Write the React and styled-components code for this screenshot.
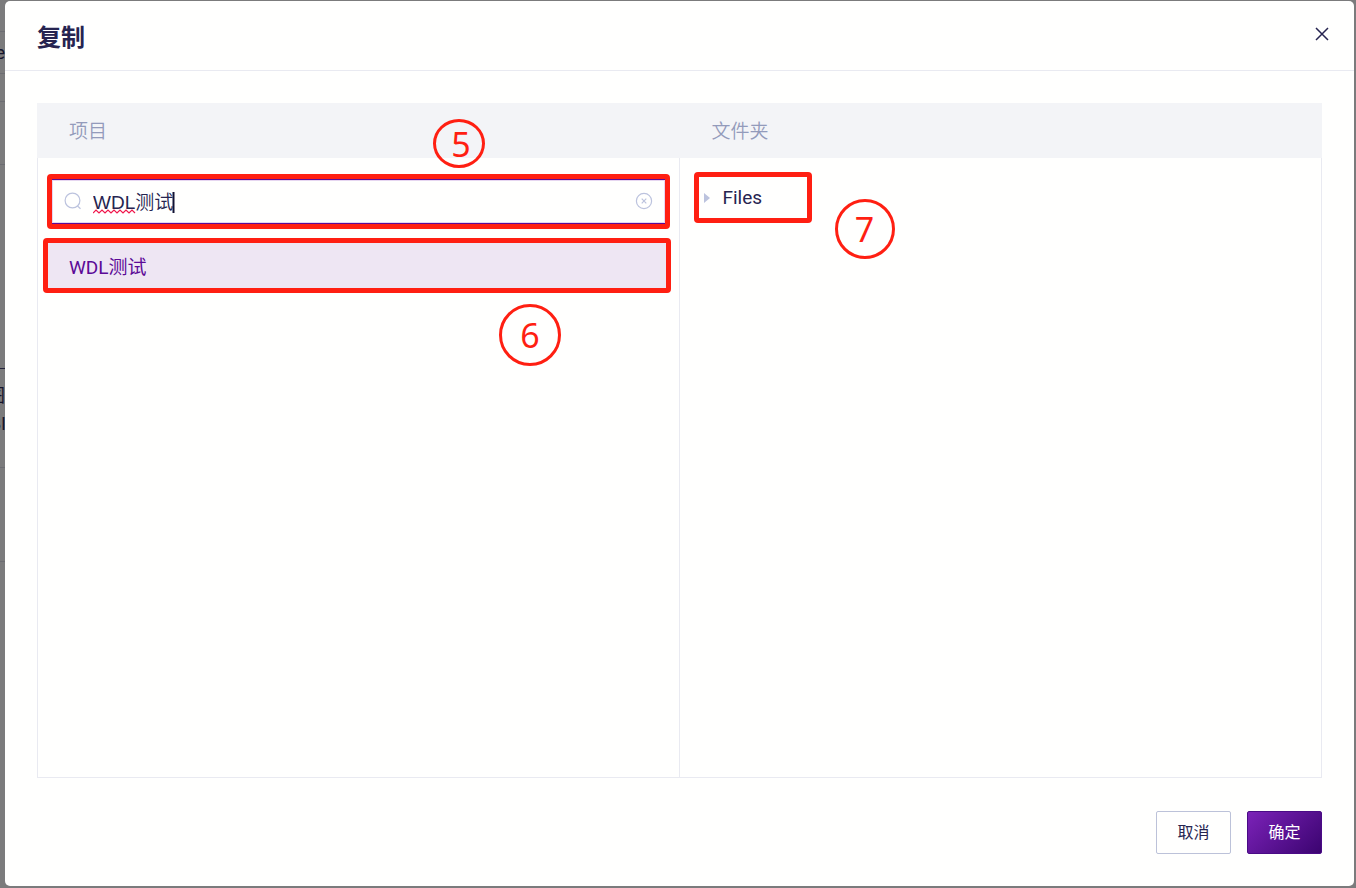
import { useState } from "react";
import styled, { createGlobalStyle } from "styled-components";

const colors = {
    text: "#262450",
    muted: "#939bbb",
    icon: "#bcc3de",
    line: "#e9eaf1",
    head: "#f3f4f7",
    purple: "#5c0a97",
    lilac: "#eee6f3",
    red: "#ff1f12",
    surface: "#fffffe",
};

const App = () => {
    const [keyword, setKeyword] = useState("WDL测试");

    return (
        <>
            <GlobalStyle />
            <Overlay>
                <Backdrop aria-hidden="true">
                    <BackRow $height={32} />
                    <BackRow $height={42}>e</BackRow>
                    <BackRow $height={28} />
                    <BackRow $height={63} />
                    <BackRow $height={204} $dark />
                    <BackRow $height={99} $top>
                        <span>图</span>
                        <BackLabel>SI</BackLabel>
                    </BackRow>
                    <BackRow $height={94} />
                </Backdrop>
                <Modal role="dialog" aria-labelledby="dialog-title">
                    <Header>
                        <Title id="dialog-title">复制</Title>
                        <CloseButton type="button" aria-label="关闭">
                            <svg width="14" height="14" viewBox="0 0 14 14">
                                <path d="M1 1l12 12M13 1L1 13" />
                            </svg>
                        </CloseButton>
                    </Header>
                    <Body>
                        <Picker>
                            <Column>
                                <ColumnHead>项目</ColumnHead>
                                <Pane>
                                    <Search>
                                        <SearchIcon />
                                        <SearchInput
                                            aria-label="搜索项目"
                                            value={keyword}
                                            spellCheck={false}
                                            onChange={(e) => setKeyword(e.target.value)}
                                        />
                                        {keyword && <EditMarks />}
                                        <ClearButton
                                            type="button"
                                            aria-label="清除"
                                            onClick={() => setKeyword("")}
                                        >
                                            <ClearIcon />
                                        </ClearButton>
                                        <Mark $spread={6} />
                                        <Step $left={381} $top={-61} $width={52} $height={49} $shift={4}>
                                            5
                                        </Step>
                                    </Search>
                                    <ProjectItem>
                                        <ProjectButton type="button">WDL测试</ProjectButton>
                                        <Mark />
                                        <Step $left={451} $top={61} $width={62} $height={62}>
                                            6
                                        </Step>
                                    </ProjectItem>
                                </Pane>
                            </Column>
                            <Column>
                                <ColumnHead>文件夹</ColumnHead>
                                <Pane>
                                    <Folder>
                                        <FolderButton type="button">
                                            <svg width="6" height="10" viewBox="0 0 6 10">
                                                <path d="M0 0l6 5-6 5z" fill={colors.icon} />
                                            </svg>
                                            Files
                                        </FolderButton>
                                        <Mark />
                                        <Step $left={136} $top={22} $width={60} $height={60}>
                                            7
                                        </Step>
                                    </Folder>
                                </Pane>
                            </Column>
                        </Picker>
                    </Body>
                    <Footer>
                        <Button type="button">取消</Button>
                        <Button type="button" $primary>
                            确定
                        </Button>
                    </Footer>
                </Modal>
            </Overlay>
        </>
    );
};
export default App;

const SearchIcon = () => (
    <svg width="18" height="18" viewBox="0 0 18 18" fill="none" stroke={colors.icon} strokeWidth="1.2">
        <circle cx="8.5" cy="8.5" r="7.4" />
        <path d="M13.5 14l3 2.8" />
    </svg>
);

const ClearIcon = () => (
    <svg width="18" height="18" viewBox="0 0 18 18" fill="none" stroke={colors.icon} strokeWidth="1.2">
        <circle cx="9" cy="9" r="7.6" />
        <path d="M6.7 6.7l4.6 4.6M11.3 6.7l-4.6 4.6" />
    </svg>
);

// spelling squiggle and text cursor
const EditMarks = () => (
    <EditLayer width="84" height="26" viewBox="0 0 84 26" fill="none" aria-hidden="true">
        <path
            d="M0 22l3-3 3 3 3-3 3 3 3-3 3 3 3-3 3 3 3-3 3 3 3-3 3 3 3-3 3 3"
            stroke="#f0184c"
            strokeWidth="1.2"
        />
        <path d="M80.500 1v21" stroke="#111133" strokeWidth="2" />
    </EditLayer>
);

const GlobalStyle = createGlobalStyle`
    * {
        box-sizing: border-box;
    }

    body {
        margin: 0;
        font-family: Roboto, "Noto Sans CJK SC", sans-serif;
        color: ${colors.text};
    }

    button,
    input {
        font-family: inherit;
        color: inherit;
        margin: 0;
    }
`;

const Overlay = styled.div`
    position: relative;
    display: flex;
    min-height: 100vh;
    padding: 1px 2px 2px 5px;
    background-color: #7b7b7c;
`;

const Backdrop = styled.div`
    position: absolute;
    top: 0;
    left: 0;
    width: 5px;
    overflow: hidden;
`;

const BackRow = styled.div`
    display: flex;
    flex-direction: column;
    align-items: flex-end;
    justify-content: ${({ $top }) => ($top ? "flex-start" : "center")};
    height: ${({ $height }) => $height}px;
    padding-top: ${({ $top }) => ($top ? 13 : 0)}px;
    border-bottom: 1px solid ${({ $dark }) => ($dark ? "#24243c" : "#6c6d72")};
    font-size: 18px;
    line-height: 28px;
    color: #15152c;
`;

const BackLabel = styled.span`
    margin-right: -1px;
    font-family: "Liberation Sans", sans-serif;
`;

const Modal = styled.div`
    position: relative;
    flex: 1;
    display: flex;
    flex-direction: column;
    border-radius: 5px;
    background-color: ${colors.surface};
`;

const Header = styled.header`
    display: flex;
    align-items: center;
    justify-content: space-between;
    height: 70px;
    padding: 0 20px 0 32px;
    border-bottom: 1px solid ${colors.line};
`;

const Title = styled.h1`
    margin: 0;
    padding-top: 4px;
    font-size: 24px;
    line-height: 32px;
    font-weight: 700;
`;

const CloseButton = styled.button`
    display: flex;
    align-items: center;
    justify-content: center;
    width: 24px;
    height: 24px;
    margin-bottom: 4px;
    padding: 0;
    border: none;
    background: none;
    cursor: pointer;

    path {
        stroke: ${colors.text};
        stroke-width: 1.5;
    }
`;

const Body = styled.div`
    flex: 1;
    display: flex;
    padding: 32px 32px 0;
`;

const Picker = styled.div`
    flex: 1;
    display: grid;
    grid-template-columns: 1fr 1fr;
`;

const Column = styled.section`
    display: flex;
    flex-direction: column;

    & + & > div {
        border-left: none;
    }
`;

const ColumnHead = styled.h2`
    margin: 0;
    padding: 2px 32px 0;
    font-size: 19px;
    line-height: 53px;
    font-weight: 350;
    color: ${colors.muted};
    background-color: ${colors.head};
`;

const Pane = styled.div`
    flex: 1;
    padding: 20px 14px;
    border: 1px solid ${colors.line};
    border-top: none;
`;

const Mark = styled.span`
    position: absolute;
    inset: -${({ $spread = 5 }) => $spread}px -5px;
    border: 5px solid ${colors.red};
    border-radius: 4px;
    pointer-events: none;
`;

const Step = styled.span`
    position: absolute;
    left: ${({ $left }) => $left}px;
    top: ${({ $top }) => $top}px;
    display: flex;
    align-items: center;
    justify-content: center;
    width: ${({ $width }) => $width}px;
    height: ${({ $height }) => $height}px;
    padding-left: ${({ $shift = 0 }) => $shift}px;
    border: 3px solid ${colors.red};
    border-radius: 50%;
    font-family: "Noto Sans", sans-serif;
    font-size: 34px;
    line-height: 40px;
    color: ${colors.red};
    pointer-events: none;
`;

const Search = styled.div`
    position: relative;
    display: flex;
    align-items: center;
    gap: 11px;
    height: 45px;
    margin-top: 1px;
    padding: 0 12px 2px;
    border: solid ${colors.purple};
    border-width: 1px 0;
    box-shadow: inset 0 0 0 1px #e6d6f0;
`;

const SearchInput = styled.input`
    flex: 1;
    min-width: 0;
    height: 40px;
    padding: 0;
    border: none;
    outline: none;
    background: none;
    font-family: "Liberation Sans", "Noto Sans CJK SC", sans-serif;
    font-size: 19px;
    font-weight: 350;
`;

const EditLayer = styled.svg`
    position: absolute;
    left: 41px;
    top: 11px;
    pointer-events: none;
`;

const ClearButton = styled.button`
    display: flex;
    padding: 0;
    border: none;
    background: none;
    cursor: pointer;
`;

const ProjectItem = styled.div`
    position: relative;
    margin: 19px -1px 0 -4px;
`;

const ProjectButton = styled.button`
    display: block;
    width: 100%;
    padding: 5px 21px 0;
    border: none;
    background-color: ${colors.lilac};
    text-align: left;
    font-size: 19px;
    line-height: 40px;
    && {
        color: ${colors.purple};
    }
`;

const Folder = styled.div`
    position: relative;
    width: 108px;
    margin-left: 5px;
    margin-top: -1px;
`;

const FolderButton = styled.button`
    display: flex;
    align-items: center;
    gap: 13px;
    width: 100%;
    padding: 0 0 0 5px;
    border: none;
    background: none;
    font-size: 19px;
    line-height: 41px;
`;

const Footer = styled.footer`
    display: flex;
    justify-content: flex-end;
    gap: 16px;
    padding: 33px 32px 32px;
`;

const Button = styled.button`
    width: 75px;
    height: 43px;
    padding: 0 0 3px;
    border: 1px solid ${({ $primary }) => ($primary ? "#4a0b86" : "#bcc2d9")};
    border-radius: 2px;
    background: ${({ $primary }) =>
        $primary ? "linear-gradient(135deg, #7b22b8, #3b0470)" : colors.surface};
    font-size: 16px;
    cursor: pointer;
    && {
        color: ${({ $primary }) => ($primary ? "#ffffff" : colors.text)};
    }
`;
